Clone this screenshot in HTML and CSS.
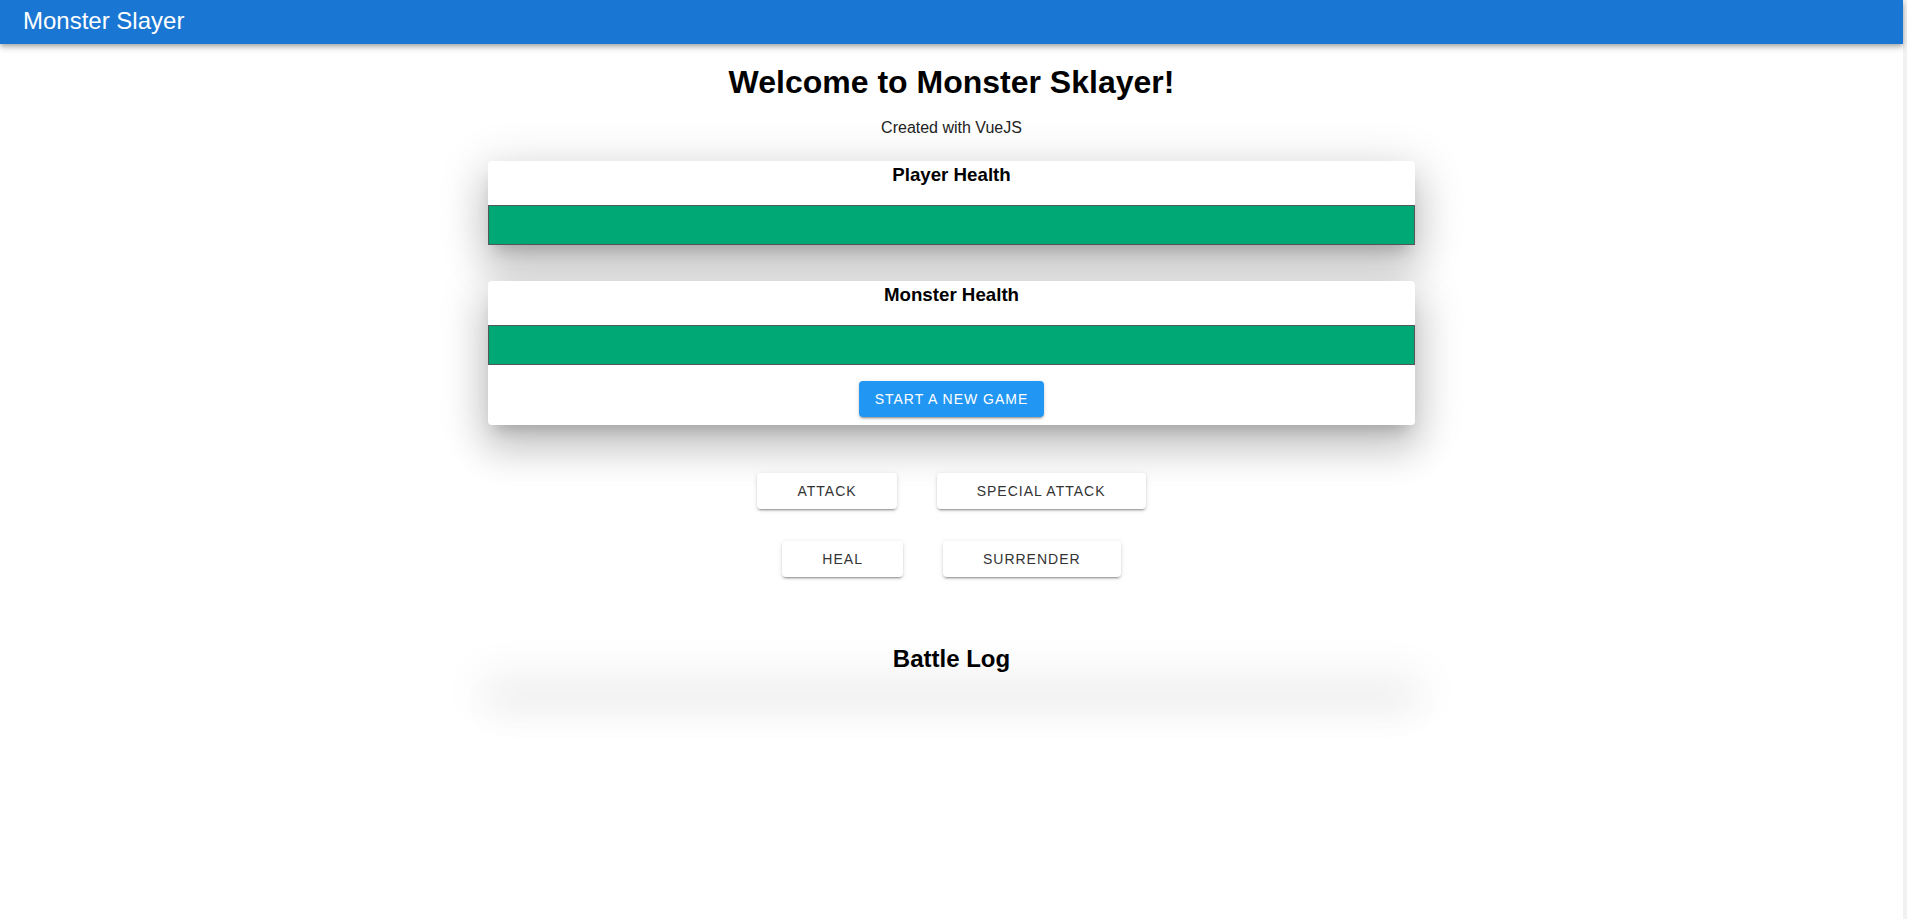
FILE: index.html
```html
<!DOCTYPE html>
<html lang="en">
<head>
<meta charset="utf-8">
<title>Monster Slayer</title>
<link rel="stylesheet" href="styles.css">
</head>
<body>
<div class="app">
  <div class="main">
    <header class="app-bar">
      <div class="app-title">Monster Slayer</div>
    </header>
    <div class="content">
      <h1 class="page-title">Welcome to Monster Sklayer!</h1>
      <p class="subtitle">Created with VueJS</p>

      <section class="card card-first">
        <h3 class="card-title">Player Health</h3>
        <div class="healthbar"><div class="healthbar-value" style="width: 100%"></div></div>
      </section>

      <section class="card card-next">
        <h3 class="card-title">Monster Health</h3>
        <div class="healthbar"><div class="healthbar-value" style="width: 100%"></div></div>
        <div class="card-actions">
          <button class="btn btn-primary">Start a new game</button>
        </div>
      </section>

      <div class="controls">
        <div class="control-row row-first">
          <button class="btn btn-plain">Attack</button>
          <button class="btn btn-plain">Special attack</button>
        </div>
        <div class="control-row row-next">
          <button class="btn btn-plain">Heal</button>
          <button class="btn btn-plain">Surrender</button>
        </div>
      </div>

      <section class="log">
        <h2 class="log-title">Battle Log</h2>
        <ul class="log-list"></ul>
      </section>
    </div>
  </div>
  <div class="scroll-strip"></div>
</div>
</body>
</html>
```

FILE: styles.css
```css
html, body {
  margin: 0;
  padding: 0;
  background: #ffffff;
}

body {
  font-family: "Liberation Sans", Arial, sans-serif;
  color: rgba(0, 0, 0, 0.87);
}

.app {
  display: flex;
  min-height: 919px;
}

.main {
  flex: 1;
  min-width: 0;
}

.scroll-strip {
  width: 4px;
  background: #f1f1f1;
}

.app-bar {
  height: 44px;
  box-sizing: border-box;
  background: #1976d2;
  color: #ffffff;
  display: flex;
  align-items: center;
  padding: 0 0 2px 23px;
  box-shadow: 0 2px 4px -1px rgba(0, 0, 0, 0.2), 0 4px 5px 0 rgba(0, 0, 0, 0.14), 0 1px 10px 0 rgba(0, 0, 0, 0.12);
  position: relative;
  z-index: 2;
}

.app-title {
  font-size: 24px;
  line-height: 28px;
}

.content {
  display: flex;
  flex-direction: column;
  align-items: center;
  text-align: center;
}

.page-title {
  margin: 18px 0 0;
  font-size: 32px;
  line-height: 40px;
  font-weight: bold;
  color: #000;
}

.subtitle {
  margin: 13.5px 0 0;
  font-size: 16px;
  line-height: 24px;
  color: #222;
}

.card {
  width: 927px;
  background: #ffffff;
  border-radius: 4px;
  box-shadow: 0 11px 15px -7px rgba(0, 0, 0, 0.2), 0 24px 38px 3px rgba(0, 0, 0, 0.14), 0 9px 46px 8px rgba(0, 0, 0, 0.12);
}

.card-first {
  margin-top: 21.5px;
}

.card-next {
  margin-top: 36px;
}

.card-title {
  margin: 0;
  font-size: 18.72px;
  line-height: 28px;
  font-weight: bold;
  color: #000;
}

.healthbar {
  margin-top: 16px;
  height: 40px;
  box-sizing: border-box;
  border: 1px solid #575757;
  background: #ffffff;
}

.healthbar-value {
  height: 100%;
  background: #00a876;
}

.card-actions {
  display: flex;
  justify-content: center;
  padding: 16px 0 8px;
}

.btn {
  height: 36px;
  box-sizing: border-box;
  border: none;
  border-radius: 4px;
  font-family: "Liberation Sans", Arial, sans-serif;
  font-size: 14px;
  letter-spacing: 1px;
  text-transform: uppercase;
  cursor: pointer;
  box-shadow: 0 3px 1px -2px rgba(0, 0, 0, 0.2), 0 2px 2px 0 rgba(0, 0, 0, 0.14), 0 1px 5px 0 rgba(0, 0, 0, 0.12);
}

.btn-primary {
  background: #2196f3;
  color: #ffffff;
  padding: 0 16px;
}

.btn-plain {
  background: #ffffff;
  color: #333;
  padding: 0 40px;
  margin: 0 20px;
}

.controls {
  display: flex;
  flex-direction: column;
  align-items: center;
}

.control-row {
  display: flex;
  justify-content: center;
}

.row-first {
  margin-top: 48px;
}

.row-next {
  margin-top: 32px;
}

.log {
  margin-top: 61px;
  width: 927px;
}

.log-title {
  margin: 0;
  font-size: 24px;
  line-height: 42px;
  font-weight: bold;
  color: #000;
}

.log-list {
  list-style: none;
  margin: 0;
  padding: 0;
  height: 0;
  background: #ffffff;
  box-shadow: 0 11px 15px -7px rgba(0, 0, 0, 0.2), 0 24px 38px 3px rgba(0, 0, 0, 0.14), 0 9px 46px 8px rgba(0, 0, 0, 0.12);
}
```
